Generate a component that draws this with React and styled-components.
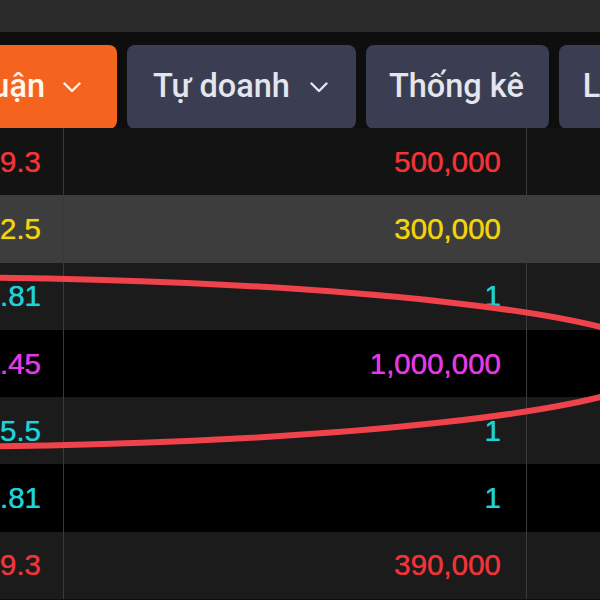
import React from "react";
import styled, { createGlobalStyle } from "styled-components";

const Global = createGlobalStyle`
  html, body { margin: 0; padding: 0; background: #000; }
  body { overflow: hidden; }
  * { box-sizing: border-box; }
`;

const Page = styled.div`
  position: relative;
  width: 600px;
  height: 600px;
  overflow: hidden;
  background: #0e0e0e;
  display: flex;
  flex-direction: column;
`;

const TopBar = styled.div`
  height: 32px;
  flex-shrink: 0;
  background: #2a2a2a;
`;

const TabStrip = styled.div`
  display: flex;
  gap: 10px;
  padding-top: 13px;
  height: 97px;
  flex-shrink: 0;
  background: #0e0e0e;
  overflow: hidden;
`;

const Tab = styled.div`
  flex-shrink: 0;
  height: 84px;
  display: flex;
  align-items: center;
  justify-content: ${(p) => (p.$cut ? "flex-end" : "flex-start")};
  gap: ${(p) => p.$gap || 20}px;
  width: ${(p) => (p.$width ? `${p.$width}px` : "auto")};
  padding: 0 ${(p) => p.$pr ?? 28}px 0 ${(p) => p.$pl ?? 26}px;
  border-radius: ${(p) => (p.$cut ? "0 8px 8px 0" : "8px")};
  background: ${(p) => (p.$active ? "#f5641e" : "#3b3e52")};
  color: ${(p) => (p.$active ? "#fff6ee" : "#e4e6ee")};
  font-family: Roboto, "Noto Sans", sans-serif;
  font-size: 32.5px;
  font-weight: 500;
  white-space: nowrap;
  overflow: hidden;
`;

const TabLabel = styled.span`
  flex-shrink: 0;
  line-height: 1;
  padding-bottom: 2px;
`;

const Chevron = () => (
  <svg width="18" height="11" viewBox="0 0 18 11" style={{ flexShrink: 0 }}>
    <polyline
      points="1.5,1.5 9,9 16.5,1.5"
      fill="none"
      stroke="currentColor"
      strokeWidth="2.4"
      strokeLinecap="round"
      strokeLinejoin="round"
    />
  </svg>
);

const Table = styled.div`
  flex: 1;
  display: flex;
  flex-direction: column;
  margin-top: -1px;
`;

const Row = styled.div`
  display: grid;
  grid-template-columns: 64px 463px 1fr;
  height: 67.3px;
  flex-shrink: 0;
  background: ${(p) => p.$bg};
`;

const Cell = styled.div`
  display: flex;
  align-items: center;
  justify-content: flex-end;
  overflow: hidden;
  white-space: nowrap;
  padding-right: ${(p) => p.$pr || 0}px;
  border-right: ${(p) => (p.$sep ? "1px solid #3a3a3a" : "none")};
  font-family: "Liberation Sans", Arial, sans-serif;
  font-size: 29.5px;
  color: ${(p) => p.$color};
  text-shadow: 0 0 0.7px currentColor;
`;

const Overlay = styled.svg`
  position: absolute;
  top: 0;
  left: 0;
  width: 600px;
  height: 600px;
  pointer-events: none;
`;

const C = {
  red: "#f03438",
  yellow: "#f2d40c",
  cyan: "#1fd2d8",
  magenta: "#e23ae6",
};

const rows = [
  { bg: "#131313", price: "9.3", vol: "500,000", color: C.red },
  { bg: "#3d3d3d", price: "2.5", vol: "300,000", color: C.yellow },
  { bg: "#1b1b1b", price: ".81", vol: "1", color: C.cyan },
  { bg: "#000000", price: ".45", vol: "1,000,000", color: C.magenta },
  { bg: "#1b1b1b", price: "5.5", vol: "1", color: C.cyan },
  { bg: "#000000", price: ".81", vol: "1", color: C.cyan },
  { bg: "#1b1b1b", price: "9.3", vol: "390,000", color: C.red },
];

export default function App() {
  return (
    <>
      <Global />
      <Page>
        <TopBar />
        <TabStrip>
          <Tab $active $cut $width={117} $pr={36} $gap={18}>
            <TabLabel>Thỏa thuận</TabLabel>
            <Chevron />
          </Tab>
          <Tab>
            <TabLabel>Tự doanh</TabLabel>
            <Chevron />
          </Tab>
          <Tab $pl={23} $pr={25}>
            <TabLabel>Thống kê</TabLabel>
          </Tab>
          <Tab $pl={24} $pr={24}>
            <TabLabel>Lịch sử</TabLabel>
          </Tab>
        </TabStrip>
        <Table>
          {rows.map((r, i) => (
            <Row key={i} $bg={r.bg}>
              <Cell $sep $pr={22} $color={r.color}>
                {r.price}
              </Cell>
              <Cell $sep $pr={25} $color={r.color}>
                {r.vol}
              </Cell>
              <Cell />
            </Row>
          ))}
        </Table>
        <Overlay viewBox="0 0 600 600">
          <ellipse
            cx="-93"
            cy="362"
            rx="761"
            ry="85"
            fill="none"
            stroke="#f0424a"
            strokeWidth="6"
          />
        </Overlay>
      </Page>
    </>
  );
}
